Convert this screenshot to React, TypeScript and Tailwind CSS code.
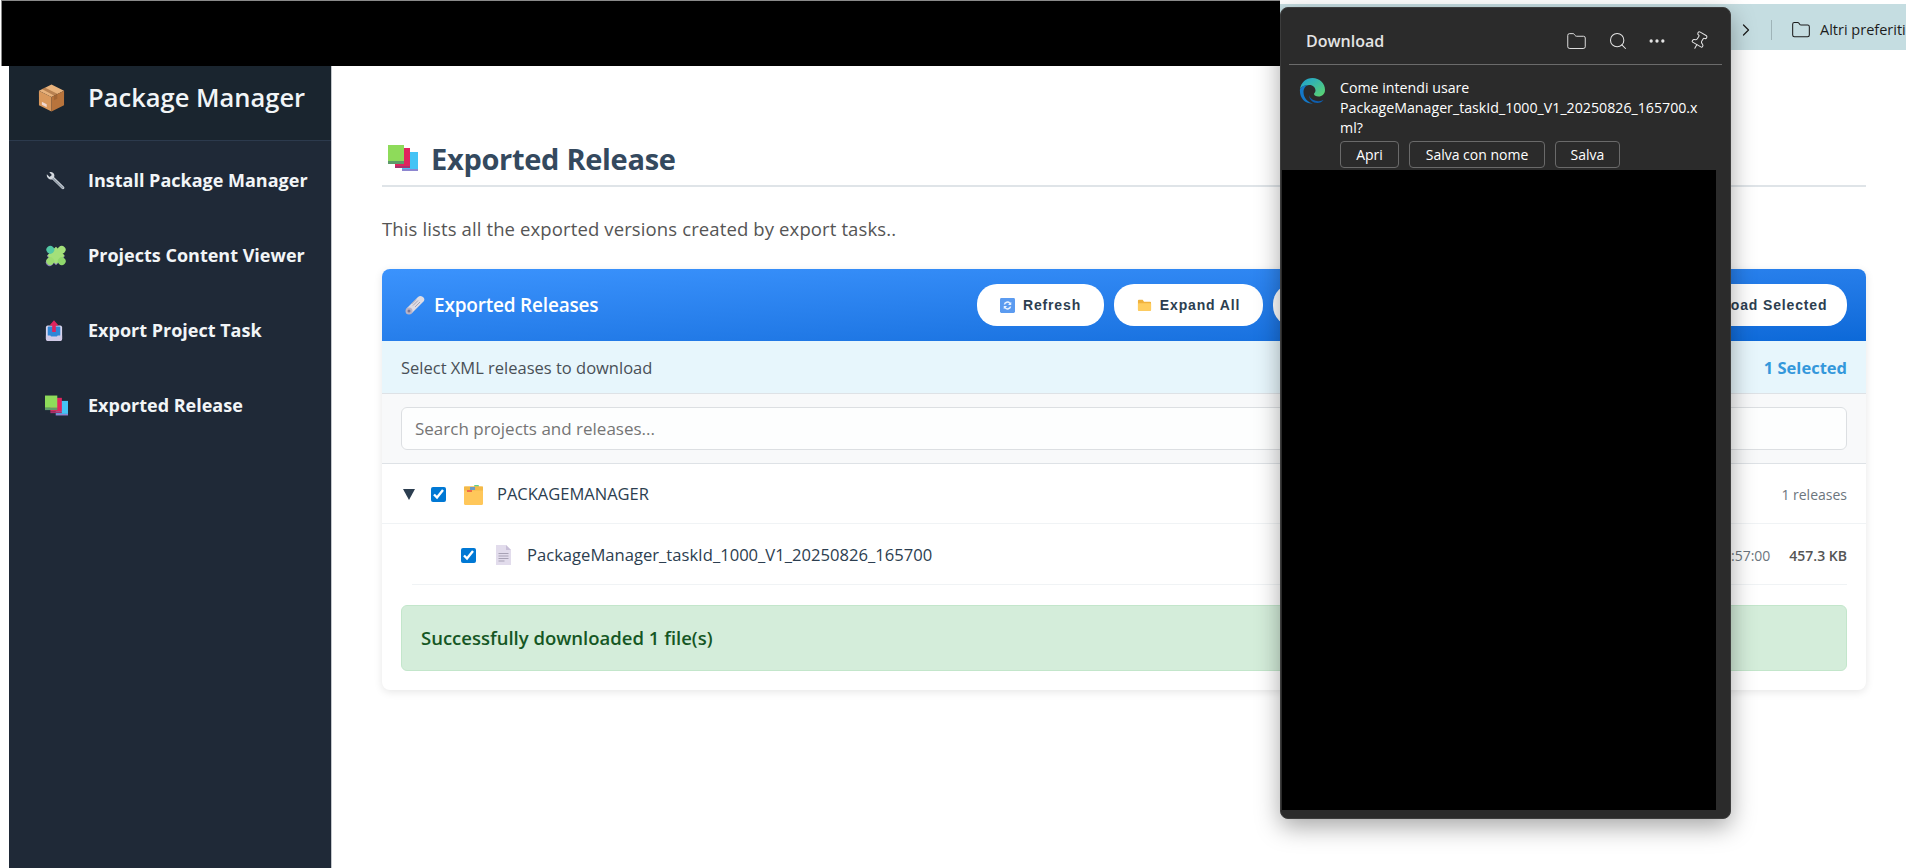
import React from "react";
import { ChevronRight, Ellipsis, Folder, Pin, Search } from "lucide-react";

const PackageIcon = () => (
  <svg viewBox="0 0 28 30" className="w-[27px] h-[30px]">
    <path d="M14 1 27 7.500 14 14 1 7.500Z" fill="#e8b27c" />
    <path d="M1 7.500 14 14v15L1 22.500Z" fill="#d9985c" />
    <path d="M27 7.500 14 14v15l13-6.500Z" fill="#b8743c" />
    <path d="M7 4.200 20 10.700v5l-3.500 1.700v-5L4 5.600Z" fill="#8f5a2e" opacity="0.55" />
    <path d="M4 19l5 2.500v3L4 22Z" fill="#f1d9d0" />
  </svg>
);

const WrenchIcon = () => (
  <svg viewBox="0 0 22 22" className="w-[21px] h-[20px]">
    <path d="M1.500 3.500 4.500 6.500 7 4.500 4.200 1.300C6.800.3 9.600 2 9.800 4.800L9.500 7l10.800 10.200c1.500 1.500-.8 3.800-2.300 2.300L7.600 9.300C4.500 10 .8 7.300 1.500 3.500Z" fill="#d3d8de" />
    <path d="M8 8 19.500 19" stroke="#8d99a6" strokeWidth="1.500" />
  </svg>
);

const PuzzleIcon = () => (
  <svg viewBox="2.500 2.500 17 17" className="w-[22px] h-[22px]">
    <g transform="rotate(45 11 11)">
      <rect x="6" y="6.500" width="10" height="9.500" fill="#8a7fb8" />
      <circle cx="11" cy="18" r="2.800" fill="#8a7fb8" />
      <rect x="6" y="6" width="9.500" height="9.500" fill="#a3e07a" />
      <circle cx="10.700" cy="4.500" r="3" fill="#a3e07a" />
      <circle cx="17" cy="10.700" r="3" fill="#8fd76c" />
      <circle cx="10.700" cy="17" r="3" fill="#9bdc72" />
      <circle cx="4.500" cy="10.700" r="3" fill="#52c7a4" />
    </g>
  </svg>
);

const OutboxIcon = () => (
  <svg viewBox="0 0 20 24" className="w-[18px] h-[22px]">
    <rect x="1" y="6" width="18" height="17" rx="2" fill="#d8d4ec" />
    <rect x="3" y="7" width="14" height="11" rx="1" fill="#2f86d6" />
    <path d="M1 17h5l1 2h6l1-2h5v4a2 2 0 0 1-2 2H3a2 2 0 0 1-2-2Z" fill="#cfc9e6" />
    <path d="M10 0 15 6h-3v7H8V6H5Z" fill="#e0245e" />
  </svg>
);

const BooksIcon = ({ className }: { className: string }) => (
  <svg viewBox="0 0 30 26" className={className}>
    <rect x="14" y="7" width="16" height="17" fill="#45c3f5" />
    <rect x="14" y="24" width="16" height="2" fill="#8d86d0" />
    <rect x="7" y="3" width="15" height="18" fill="#e0245e" />
    <rect x="7" y="21" width="15" height="2" fill="#a8326f" />
    <rect x="0" y="0" width="16" height="16" fill="#8edb5a" />
    <rect x="0" y="16" width="16" height="3" fill="#5e9a6a" />
  </svg>
);

const RollIcon = () => (
  <svg viewBox="0 0 20 20" className="w-[20px] h-[20px]">
    <path d="M1.500 13.500 13 2c1.500-1.500 3-1.500 5 0s1.500 3.500.5 4.500L7 18Z" fill="#dedce4" />
    <path d="M8 10.500 13 5.500M10 12 15 7M6.500 9 11 4.500" stroke="#a9a6b3" strokeWidth="1" />
    <circle cx="4" cy="16" r="3.500" fill="#b9b3c6" />
    <circle cx="4" cy="16" r="1.500" fill="#7d7590" />
  </svg>
);

const RefreshIcon = () => (
  <svg viewBox="0 0 16 16" className="w-[15px] h-[15px]">
    <rect width="16" height="16" rx="1.500" fill="#5b9bf0" />
    <path d="M4 7a4 4 0 0 1 7-2l1-1v3.500H8.500L10 6a2.700 2.700 0 0 0-4.500 1ZM12 9a4 4 0 0 1-7 2l-1 1V8.500h3.500L6 10a2.700 2.700 0 0 0 4.500-1Z" fill="#e9f2ff" />
  </svg>
);

const FolderEmoji = () => (
  <svg viewBox="0 0 16 14" className="w-[15px] h-[14px]">
    <path d="M1 2.500A1 1 0 0 1 2 1.500h4l1.500 2H14a1 1 0 0 1 1 1V12a1 1 0 0 1-1 1H2a1 1 0 0 1-1-1Z" fill="#f0b23d" />
    <path d="M1 6a1 1 0 0 1 1-1h12a1 1 0 0 1 1 1v6a1 1 0 0 1-1 1H2a1 1 0 0 1-1-1Z" fill="#ffcd5e" />
  </svg>
);

const DownloadEmoji = () => (
  <svg viewBox="0 0 16 16" className="w-[15px] h-[15px]">
    <rect x="1" y="9" width="14" height="6" rx="1" fill="#cfc9e6" />
    <path d="M8 10 3.500 5H6V1h4v4h2.500Z" fill="#2f86d6" />
  </svg>
);

const ProjectFolderIcon = () => (
  <svg viewBox="0 0 20 20" className="w-[20px] h-[20px] shrink-0">
    <rect x="11" y="0" width="5" height="3" rx="1" fill="#5fd08a" />
    <rect x="1" y="1.500" width="19" height="18.500" rx="1.500" fill="#ffc75a" />
    <rect x="1" y="1.500" width="19" height="4" fill="#f3b948" />
    <rect x="7" y="2" width="5" height="3" fill="#6b9bc4" />
    <rect x="4" y="5" width="5" height="2" fill="#ef6a4a" />
  </svg>
);

const FileIcon = () => (
  <svg viewBox="0 0 15 20" className="w-[15px] h-[20px] shrink-0">
    <path d="M0 0h10l5 5v15H0Z" fill="#e2dcec" />
    <path d="M10 0l5 5h-5Z" fill="#c8bfd8" />
    <path d="M2.500 8.500h10M2.500 11h10M2.500 13.500h10M2.500 16h6" stroke="#a8a2b5" strokeWidth="1" />
  </svg>
);

const EdgeLogo = () => (
  <svg viewBox="0 0 26 26" className="w-[26px] h-[26px] shrink-0">
    <defs>
      <linearGradient id="edgeTop" x1="0" y1="0" x2="1" y2="1">
        <stop offset="0" stopColor="#1a9fd8" />
        <stop offset="1" stopColor="#5fd66a" />
      </linearGradient>
    </defs>
    <path d="M1 11C2 4.500 7 0 13.500 0 20.500 0 26 5 26 12c0 4-3 6.500-6.500 6.500-2.500 0-4.500-1-4.500-2.500 0-1 1.500-1.500 1.500-3.500C16.500 9.500 14 7 10.500 7 6 7 2.500 8.500 1 11Z" fill="url(#edgeTop)" />
    <path d="M1 11c1.500-2.500 5-4 8.500-4C6 8 4.500 11 4.500 14c0 6 4.500 10.500 9.500 11.500C6.500 26.500 0 20 1 11Z" fill="#1478c8" />
    <path d="M10 17c0 4.500 4 8 8.500 8 2.500 0 4.500-1 6-3-2 1-4 1.500-6.500 1C14 22.500 10.500 20 10 17Z" fill="#0f5fb0" />
  </svg>
);

const HeaderButton = ({ icon, label, className }: { icon?: React.ReactNode; label: string; className: string }) => (
  <button className={`h-[42px] bg-white rounded-[20px] flex items-center justify-center gap-2 font-['Liberation_Sans',sans-serif] font-bold text-[14px] tracking-[0.85px] text-[#2c3e50] ${className}`}>
    {icon}
    {label}
  </button>
);

const NavItem = ({ icon, label }: { icon: React.ReactNode; label: string }) => (
  <div className="h-[75px] flex items-center">
    <div className="w-[79px] pl-[36px] flex justify-start">{icon}</div>
    <span className="text-[18px] font-bold text-[#f2f5f7] whitespace-nowrap">{label}</span>
  </div>
);

const PopupButton = ({ label, className }: { label: string; className: string }) => (
  <button className={`h-[27px] rounded-[4px] border border-[#6a6a6a] text-[14px] text-white ${className}`}>{label}</button>
);

export default function App() {
  return (
    <div className="relative w-full h-[868px] overflow-hidden bg-white font-['Open_Sans','Noto_Sans',sans-serif]">
      {/* top strip */}
      <div className="h-[66px] flex">
        <div className="ml-px w-[1279px] bg-black border-t border-l border-[#8a8a8a]" />
        <div className="flex-1 mt-1 h-[46px] pt-[6px] bg-[#c5dde1] flex items-center pl-[456px] text-[#1c1c1c]">
          <ChevronRight size={20} strokeWidth={1.500} className="shrink-0" />
          <div className="ml-[15px] w-px h-[20px] bg-[#9fb4b8] shrink-0" />
          <Folder size={20} strokeWidth={1.250} className="ml-[19px] shrink-0" />
          <span className="ml-[9px] text-[14.500px] whitespace-nowrap">Altri preferiti</span>
        </div>
      </div>

      <div className="flex h-[802px] pl-[9px]">
        {/* sidebar */}
        <aside className="w-[323px] shrink-0 bg-[#1f2937] border-r border-[#c4c8cc]">
          <div className="h-[75px] bg-[#1a252f] border-b border-[#2c3a4d] flex items-center pb-[11px]">
            <div className="w-[79px] pl-[29px]"><PackageIcon /></div>
            <span className="text-[25.500px] font-semibold text-[#f2f5f7] whitespace-nowrap">Package Manager</span>
          </div>
          <div className="pt-[2px]">
            <NavItem icon={<WrenchIcon />} label="Install Package Manager" />
            <NavItem icon={<PuzzleIcon />} label="Projects Content Viewer" />
            <NavItem icon={<OutboxIcon />} label="Export Project Task" />
            <NavItem icon={<BooksIcon className="w-[23px] h-[21px]" />} label="Exported Release" />
          </div>
        </aside>

        {/* main */}
        <main className="flex-1 min-w-0 pl-[50px] pr-[40px]">
          <div className="h-[121px] border-b-2 border-[#dfe4e8] flex items-end pl-[6px] pb-[5px]">
            <div className="flex items-center gap-[13px]">
              <BooksIcon className="w-[30px] h-[26px]" />
              <h1 className="text-[29px] font-bold text-[#34495e] tracking-[-0.3px]">Exported Release</h1>
            </div>
          </div>
          <p className="mt-[30px] h-[24px] leading-[24px] text-[18.500px] text-[#555] tracking-[0.12px] whitespace-nowrap">
            This lists all the exported versions created by export tasks..
          </p>

          <section className="mt-[28px] rounded-[8px] bg-white shadow-[0_2px_8px_rgba(0,0,0,0.1)] overflow-hidden">
            <div className="h-[72px] bg-gradient-to-br from-[#3b93fd] to-[#0c69d8] flex items-center pl-[23px] pr-[19px]">
              <RollIcon />
              <span className="ml-[9px] text-[19px] font-semibold text-white tracking-[-0.2px] whitespace-nowrap">Exported Releases</span>
              <div className="ml-auto flex gap-[10px]">
                <HeaderButton icon={<RefreshIcon />} label="Refresh" className="w-[127px]" />
                <HeaderButton icon={<FolderEmoji />} label="Expand All" className="w-[149px]" />
                <HeaderButton label="Collapse All" className="w-[150px]" />
                <HeaderButton label="Select All" className="w-[199px]" />
                <HeaderButton icon={<DownloadEmoji />} label="Download Selected" className="w-[205px]" />
              </div>
            </div>

            <div className="h-[53px] pt-[2px] bg-[#e7f6fc] border-b border-[#dee2e6] flex items-center justify-between px-[19px]">
              <span className="text-[16.500px] text-[#495057]">Select XML releases to download</span>
              <span className="text-[16.500px] font-bold text-[#3498db]">1 Selected</span>
            </div>

            <div className="h-[70px] bg-[#f8f9fa] border-b border-[#dee2e6] flex items-center px-[19px]">
              <input
                readOnly
                placeholder="Search projects and releases..."
                className="w-full h-[43px] rounded-[6px] border border-[#dcdfe2] bg-[#fdfefe] px-[13px] text-[17px] placeholder:text-[#757575] outline-none"
              />
            </div>

            <div className="h-[60px] pt-[2px] border-b border-[#f0f3f5] flex items-center pl-[21px] pr-[19px]">
              <span className="w-0 h-0 border-x-[6.500px] border-x-transparent border-t-[11px] border-t-[#2c3e50]" />
              <input type="checkbox" checked readOnly className="ml-[16px] w-[15px] h-[15px] accent-[#0078d4]" />
              <div className="ml-[17px]"><ProjectFolderIcon /></div>
              <span className="ml-[14px] text-[16.500px] text-[#2c3e50]">PACKAGEMANAGER</span>
              <span className="ml-auto text-[14px] text-[#6c757d]">1 releases</span>
            </div>

            <div className="ml-[30px] mr-[19px] h-[61px] pt-[2px] border-b border-[#f0f3f5] flex items-center pl-[49px]">
              <input type="checkbox" checked readOnly className="w-[15px] h-[15px] accent-[#0078d4]" />
              <div className="ml-[20px]"><FileIcon /></div>
              <span className="ml-[16px] text-[16.600px] text-[#2c3e50]">PackageManager_taskId_1000_V1_20250826_165700</span>
              <span className="ml-auto text-[14px] text-[#6c757d]">26/08/2025, 16:57:00</span>
              <span className="ml-[19px] text-[14px] font-semibold text-[#555]">457.3 KB</span>
            </div>

            <div className="mx-[19px] mt-[20px] mb-[19px] h-[66px] rounded-[6px] bg-[#d4edda] border border-[#c3e6cb] flex items-center px-[19px]">
              <span className="text-[18.500px] font-semibold text-[#155724]">Successfully downloaded 1 file(s)</span>
            </div>
          </section>
        </main>
      </div>

      {/* browser download popup */}
      <div className="absolute left-[1280px] top-[7px] w-[451px] h-[812px] rounded-[8px] bg-[#2b2b2b] border border-[#3d3d3d] shadow-[0_8px_24px_rgba(0,0,0,0.35)] flex flex-col">
        <div className="mx-[8px] h-[57px] pt-[10px] shrink-0 border-b border-[#6b6b6b] flex items-center pl-[17px] pr-[13px] text-[#e4e4e4]">
          <span className="text-[16px] font-semibold">Download</span>
          <Folder size={21} strokeWidth={1.100} className="ml-auto" />
          <Search size={20} strokeWidth={1.250} className="ml-[21px]" />
          <Ellipsis size={20} strokeWidth={2} className="ml-[19px]" />
          <Pin size={20} strokeWidth={1.250} className="ml-[22px] rotate-[30deg]" />
        </div>
        <div className="flex pl-[18px] pt-[13px] shrink-0">
          <EdgeLogo />
          <div className="ml-[15px] w-[370px]">
            <p className="text-[14.200px] leading-[20px] text-white whitespace-nowrap">
              Come intendi usare<br />PackageManager_taskId_1000_V1_20250826_165700.x<br />ml?
            </p>
            <div className="mt-[3px] flex gap-[10px]">
              <PopupButton label="Apri" className="w-[59px]" />
              <PopupButton label="Salva con nome" className="w-[136px]" />
              <PopupButton label="Salva" className="w-[65px]" />
            </div>
          </div>
        </div>
        <div className="mt-[2px] ml-px w-[434px] flex-1 bg-black mb-[8px]" />
      </div>
    </div>
  );
}
